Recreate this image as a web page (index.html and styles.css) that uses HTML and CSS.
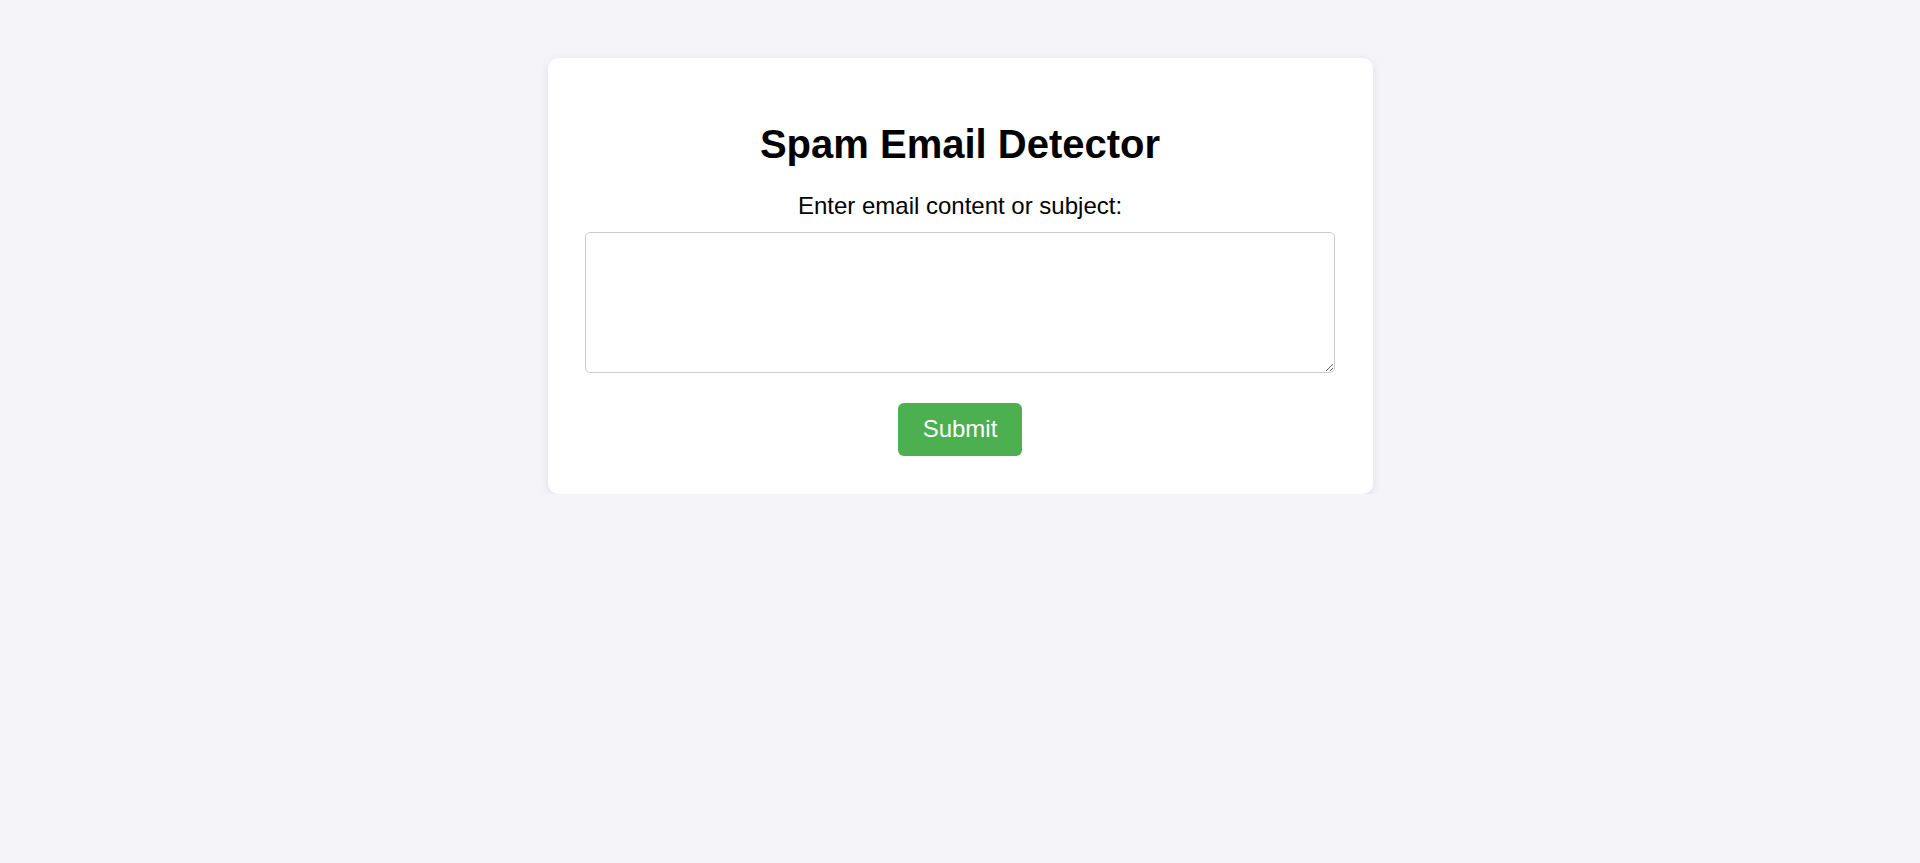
FILE: index.html
```html
<!DOCTYPE html>
<html lang="en">
<head>
<meta charset="utf-8">
<title>Spam Email Detector</title>
<link rel="stylesheet" href="styles.css">
</head>
<body>
  <main class="card">
    <h1 class="title">Spam Email Detector</h1>
    <form class="form">
      <label class="label" for="email">Enter email content or subject:</label>
      <textarea id="email" class="input"></textarea>
      <button type="button" class="submit">Submit</button>
    </form>
  </main>
</body>
</html>
```

FILE: styles.css
```css
html, body {
  margin: 0;
  padding: 0;
}

body {
  background: #f4f4f9;
  font-family: "Liberation Sans", Arial, sans-serif;
  color: #000;
  padding-top: 58px;
}

.card {
  box-sizing: border-box;
  width: 825px;
  margin: 0 auto;
  background: #fff;
  border-radius: 10px;
  box-shadow: 0 2px 10px rgba(0, 0, 0, 0.1);
  padding: 37.5px 37.5px 38px;
  text-align: center;
}

.title {
  font-size: 40px;
  font-weight: bold;
  line-height: 46px;
  margin: 25px 0 25px;
}

.form {
  display: flex;
  flex-direction: column;
  align-items: center;
}

.label {
  display: block;
  font-size: 24px;
  line-height: 27.6px;
  margin-bottom: 13px;
}

.input {
  box-sizing: border-box;
  width: 750px;
  height: 141px;
  border: 1.25px solid #ccc;
  border-radius: 5px;
  margin: 0 0 30px;
  padding: 12px;
  font-family: "Liberation Sans", Arial, sans-serif;
  font-size: 20px;
  resize: both;
}

.submit {
  box-sizing: border-box;
  height: 52.5px;
  padding: 0 25px;
  border: none;
  border-radius: 6px;
  background: #4caf50;
  color: #fff;
  font-family: "Liberation Sans", Arial, sans-serif;
  font-size: 24px;
  cursor: pointer;
}
```
